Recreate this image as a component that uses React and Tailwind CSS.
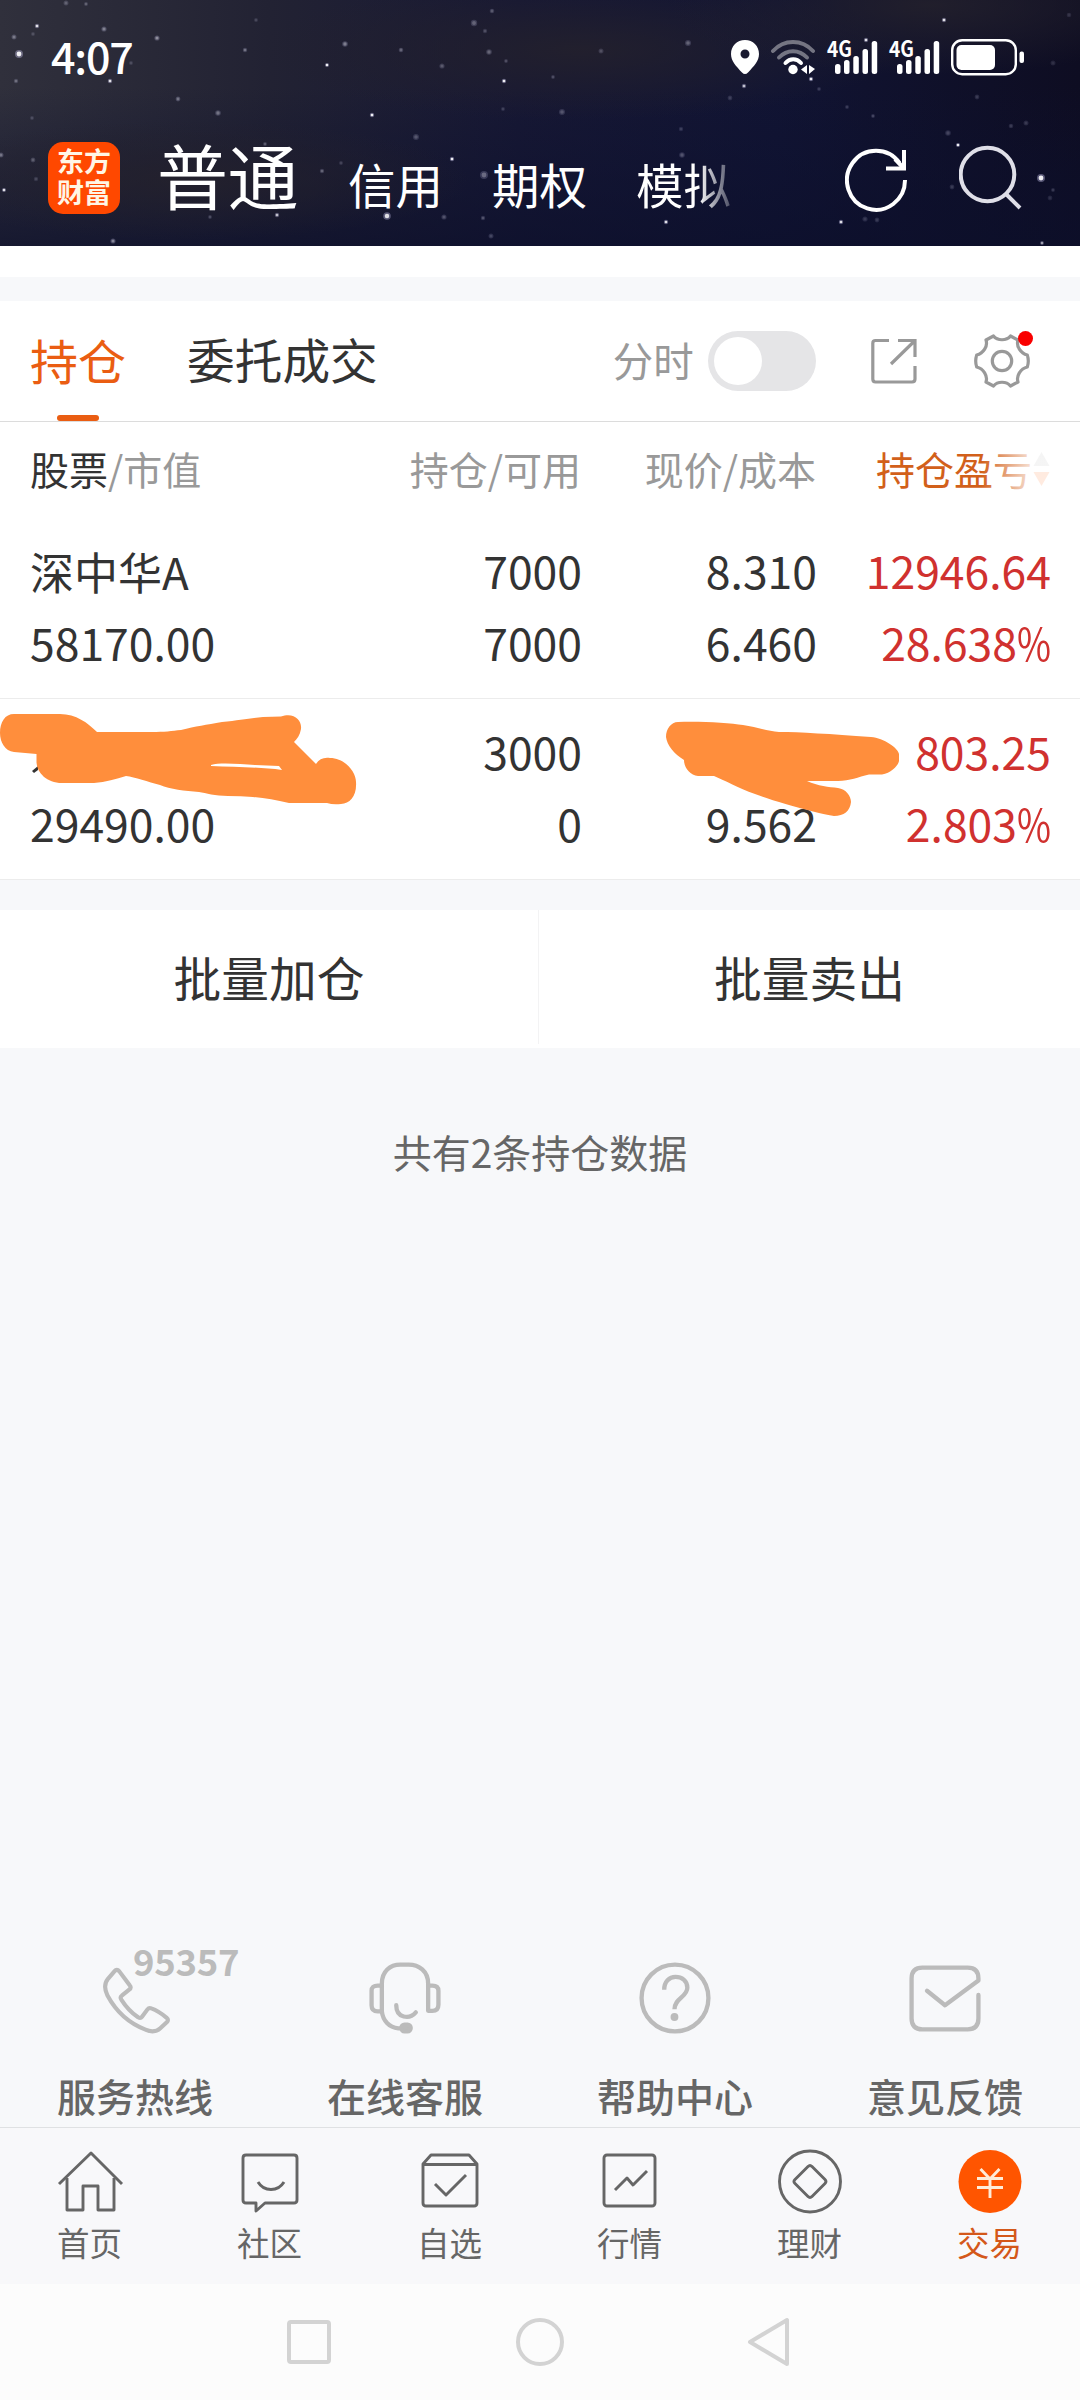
const holdings = [
  {
    name: '深中华A',
    value: '58170.00',
    amount: '7000',
    available: '7000',
    price: '8.310',
    cost: '6.460',
    profit: '12946.64',
    rate: '28.638',
  },
  {
    name: '',
    value: '29490.00',
    amount: '3000',
    available: '0',
    price: '',
    cost: '9.562',
    profit: '803.25',
    rate: '2.803',
  },
];

// [x, y, radius, opacity]
const stars = [
  [19, 54, 4, 0.95], [37, 26, 2.2, 0.9], [14, 37, 2.5, 0.5], [33, 34, 2, 0.3], [66, 3, 2.5, 0.4],
  [86, 4, 2, 0.4], [104, 29, 2.6, 0.55], [157, 38, 2.6, 0.6], [110, 81, 2.2, 0.9], [16, 81, 2.2, 0.45],
  [131, 63, 2, 0.3], [178, 99, 2.4, 0.5], [218, 113, 2.8, 0.5], [245, 50, 2.2, 0.5], [256, 20, 2, 0.3],
  [327, 65, 2.1, 0.95], [345, 44, 2.8, 0.55], [401, 50, 2.3, 0.45], [372, 115, 2.2, 0.95], [416, 137, 3, 0.4],
  [442, 66, 2.6, 0.4], [474, 23, 3.2, 0.45], [492, 11, 2.3, 0.4], [485, 31, 2.2, 0.35], [489, 52, 2.8, 0.45],
  [506, 61, 2, 0.35], [504, 81, 2.2, 0.95], [503, 109, 2, 0.3], [452, 159, 2.2, 0.95], [484, 175, 4, 0.5],
  [4, 190, 2.1, 0.9], [1, 155, 2.5, 0.5], [33, 160, 2.4, 0.4], [32, 118, 2, 0.3], [36, 179, 2.2, 0.3],
  [113, 241, 2.6, 0.6], [277, 215, 2.2, 0.8], [210, 217, 2, 0.35], [387, 216, 3.8, 0.9], [444, 217, 2.6, 0.4],
  [483, 218, 2.2, 0.4], [491, 236, 2.5, 0.35], [322, 171, 2.2, 0.45], [341, 163, 2, 0.3], [265, 144, 2, 0.4],
  [562, 112, 3, 0.4], [601, 51, 2.5, 0.35], [688, 43, 3, 0.45], [682, 155, 2.8, 0.4], [681, 129, 2.2, 0.3],
  [666, 222, 2.2, 0.9], [744, 86, 2.2, 0.8], [811, 79, 2.2, 0.95], [866, 40, 2.2, 0.9], [944, 20, 2.2, 0.9],
  [841, 222, 2.2, 0.9], [958, 145, 2.1, 0.95], [948, 133, 2.8, 0.35], [977, 97, 2.4, 0.3], [1026, 123, 2.5, 0.3],
  [1011, 126, 2.3, 0.3], [1041, 178, 4, 0.95], [1053, 190, 2, 0.3], [1050, 198, 2.4, 0.25], [1042, 243, 2, 0.7],
  [865, 219, 2.6, 0.3], [877, 220, 2.4, 0.3], [873, 116, 2, 0.35], [847, 107, 2, 0.3], [952, 187, 2.4, 0.3],
  [1053, 63, 2.5, 0.25], [1069, 15, 2.3, 0.25], [730, 98, 2.4, 0.3], [819, 89, 2, 0.3], [553, 77, 2, 0.35],
];

function StarrySky() {
  return (
    <svg className="absolute inset-0" width="1080" height="246" viewBox="0 0 1080 246">
      <defs>
        <linearGradient id="sky" x1="0" y1="0" x2="1" y2="0">
          <stop offset="0" stopColor="#30303c" />
          <stop offset="0.25" stopColor="#222233" />
          <stop offset="0.48" stopColor="#171834" />
          <stop offset="0.72" stopColor="#111433" />
          <stop offset="1" stopColor="#0e0d22" />
        </linearGradient>
        <linearGradient id="dusk" x1="0" y1="0" x2="0" y2="1">
          <stop offset="0.35" stopColor="#0c1030" stopOpacity="0" />
          <stop offset="1" stopColor="#0c0f2b" stopOpacity="0.7" />
        </linearGradient>
        <radialGradient id="haze">
          <stop offset="0" stopColor="#24212c" stopOpacity="0.85" />
          <stop offset="1" stopColor="#24212c" stopOpacity="0" />
        </radialGradient>
      </defs>
      <rect width="1080" height="246" fill="url(#sky)" />
      <rect width="1080" height="246" fill="url(#dusk)" />
      <ellipse cx="580" cy="50" rx="320" ry="70" fill="url(#haze)" />
      <ellipse cx="930" cy="5" rx="260" ry="70" fill="url(#haze)" />
      <ellipse cx="190" cy="180" rx="280" ry="60" fill="url(#haze)" />
      {stars.map(([x, y, r, o], i) => (
        <g key={i} fill="#cfcbf5">
          <circle cx={x} cy={y} r={r} opacity={o * 0.4} />
          <circle cx={x} cy={y} r={r * 0.6} opacity={o * o} fill="#fff" />
        </g>
      ))}
    </svg>
  );
}

function Signal() {
  return (
    <svg className="overflow-visible" width="51" height="36" viewBox="0 0 51 36" fill="#fff">
      <text x="0" y="18" fontSize="22" fontWeight="700" textLength="25" lengthAdjust="spacingAndGlyphs">4G</text>
      <rect x="8" y="25" width="5.5" height="10" rx="2.5" />
      <rect x="17" y="21" width="5.5" height="14" rx="2.5" />
      <rect x="26.300" y="17" width="5.5" height="18" rx="2.5" />
      <rect x="35.500" y="10" width="5.5" height="25" rx="2.5" />
      <rect x="44.700" y="2" width="5.5" height="33" rx="2.5" />
    </svg>
  );
}

function StatusBar() {
  return (
    <div className="relative flex h-[114px] items-center justify-between pl-[51px] pr-[56px]">
      <span className="text-[43px] leading-[50px] font-medium tracking-[-1.2px] text-white pb-[5px]">4:07</span>
      <div className="flex items-center">
        <svg width="28" height="36" viewBox="0 0 28 36" fill="#fff">
          <path fillRule="evenodd" d="M14 1C6 1 0 7 0 15c0 7 5 12 11 18.500q3 3 6 0C23 27 28 22 28 15 28 7 22 1 14 1zm0 9.500a4.500 4.500 0 1 1 0 9 4.500 4.500 0 0 1 0-9z" />
        </svg>
        <svg className="ml-[12px]" width="45" height="36" viewBox="0 0 45 36" fill="none" stroke="#fff" strokeWidth="4" strokeLinecap="round">
          <path d="M2 12C13 0 31 0 42 12" opacity="0.4" />
          <path d="M8 18.500c8-8.500 20-8.500 28 0" opacity="0.4" />
          <path d="M14.500 24c4.500-5 11-5 15.500 0" />
          <circle cx="22" cy="30.500" r="4.700" fill="#fff" stroke="none" />
          <path d="M36 26v9l-6-4.500zM38 26v9l6-5z" fill="#fff" stroke="none" />
        </svg>
        <div className="ml-[11px] flex gap-[11px]">
          <Signal />
          <Signal />
        </div>
        <svg className="ml-[11px]" width="73" height="38" viewBox="0 0 73 38">
          <rect x="1.200" y="2.200" width="63.600" height="34" rx="10" fill="none" stroke="#fff" strokeWidth="2.400" />
          <rect x="5.500" y="7" width="38.500" height="25" rx="5" fill="#fff" />
          <rect x="68.500" y="13.500" width="4.500" height="11.500" rx="2" fill="#fff" />
        </svg>
      </div>
    </div>
  );
}

function Header() {
  return (
    <div className="relative h-[246px] overflow-hidden">
      <StarrySky />
      <StatusBar />
      <div className="relative flex items-start pl-[48px] text-white">
        <div className="mt-[28px] w-[72px] h-[72px] rounded-[15px] bg-[#ff4800] px-[9px] pt-[3px] text-center text-[27px] font-bold leading-[31px] text-[#fff6e6]">
          东方<br />财富
        </div>
        <div className="ml-[37px] mt-[23px] flex items-baseline whitespace-nowrap leading-[72px]">
          <span className="text-[71px] tracking-[-0.500px]">普通</span>
          <span className="ml-[50px] mt-[2px] text-[47.500px]">信用</span>
          <span className="ml-[49px] text-[47.500px]">期权</span>
          <span className="ml-[49px] bg-linear-to-r from-white from-65% to-white/25 bg-clip-text text-[47.500px] text-transparent">模拟</span>
        </div>
        <svg className="ml-[114px] mt-[31px]" width="64" height="68" viewBox="0 0 64 68" fill="none" stroke="#fff" strokeWidth="4">
          <path d="M60 35A29 29.500 0 1 1 54.500 18" />
          <path d="M59 5v18.500H41" />
          <path d="M50 14l9 9.500" />
        </svg>
        <svg className="ml-[50px] mt-[31px]" width="64" height="68" viewBox="0 0 64 68" fill="none" stroke="#dfdfe8" strokeWidth="4">
          <circle cx="28.500" cy="29.500" r="26.800" />
          <path d="M47 49l14 14" />
        </svg>
      </div>
    </div>
  );
}

function TabBar() {
  return (
    <div className="flex h-[121px] items-center border-b border-[#dcdcdc] bg-white pl-[30px]">
      <div className="flex h-full flex-col items-center">
        <span className="mt-[34px] text-[48px] leading-[48px] text-[#ea5d12]">持仓</span>
        <span className="mt-auto h-[6px] w-[42px] rounded-full bg-[#ea5d12]" />
      </div>
      <span className="ml-[61px] pb-[5px] text-[47.700px] leading-[48px] text-[#333]">委托成交</span>
      <span className="ml-[235px] pb-[3px] text-[40.500px] leading-[44px] text-[#999]">分时</span>
      <div className="ml-[14px] flex h-[60px] w-[108px] items-center rounded-full bg-[#e5e5e7] pl-[6px]">
        <div className="h-[48px] w-[48px] rounded-full bg-white" />
      </div>
      <svg className="ml-[54px]" width="48" height="48" viewBox="0 0 48 48" fill="none" stroke="#999" strokeWidth="3.200">
        <path d="M19 3.500H5.500Q2.800 3.500 2.800 6.200V42q0 3 2.700 3H42q3 0 3-3V29" />
        <path d="M28 3.500H45V20M44 4.500L21 27" />
      </svg>
      <div className="relative ml-[56px]">
        <svg width="56" height="56" viewBox="0 0 56 56" fill="none" stroke="#999" strokeWidth="3.200" strokeLinejoin="round">
          <path d="M19.500 3c4 5 13 5 17 0l7.500 4c-2 6 2.500 13.500 9.300 15q2 6 0 12C46.500 35.500 42 43 44 49l-7.500 4c-4-5-13-5-17 0L12 49C14 43 9.500 35.500 2.700 34q-2-6 0-12C9.500 20.500 14 13 12 7z" />
          <circle cx="28" cy="28" r="9.700" />
        </svg>
        <span className="absolute right-[-3px] top-[-2px] h-[15px] w-[15px] rounded-full bg-[#f90000]" />
      </div>
    </div>
  );
}

function TableHead() {
  return (
    <div className="grid h-[96px] grid-cols-[301px_250px_235px_235px] pl-[30px] text-[39px] leading-[93px] text-[#999]">
      <span><span className="text-[#333]">股票</span>/市值</span>
      <span className="text-right">持仓/可用</span>
      <span className="text-right">现价/成本</span>
      <div className="relative flex items-center justify-end pb-[3px] text-[#d2601a]">
        <span>持仓盈亏</span>
        <svg className="ml-px mr-px" width="17" height="36" viewBox="0 0 17 36">
          <path d="M8.500 1l8 14h-16z" fill="#bbb" />
          <path d="M8.500 35l8-14h-16z" fill="#ff7a30" />
        </svg>
        <span className="absolute right-0 top-0 h-full w-[70px] bg-linear-to-r from-white/0 to-white/85 to-75%" />
      </div>
    </div>
  );
}

function HoldingRow({ item }) {
  return (
    <div className="grid h-[181px] grid-cols-[301px_251px_235px_234px] border-b border-[#ececec] pl-[30px] pt-[16px] text-[44.500px] leading-[72px] text-[#333]">
      <div className="flex flex-col">
        <span className="h-[72px] pt-px text-[44px]">{item.name}</span>
        <span>{item.value}</span>
      </div>
      <div className="flex flex-col text-right">
        <span className="h-[72px]">{item.amount}</span>
        <span>{item.available}</span>
      </div>
      <div className="flex flex-col text-right">
        <span className="h-[72px]">{item.price}</span>
        <span>{item.cost}</span>
      </div>
      <div className="flex flex-col text-right text-[#d0312f]">
        <span className="h-[72px]">{item.profit}</span>
        <span>
          {item.rate}
          <span className="ml-[-7px] inline-block origin-right scale-x-[0.83]">%</span>
        </span>
      </div>
    </div>
  );
}

// Brush strokes hiding the name and price of the last holding
function Scribbles() {
  return (
    <svg className="absolute bottom-0 left-0" width="1080" height="181" viewBox="0 699 1080 181">
      <path d="M32 771l6-5v4l-4 3z" fill="#333" />
      <g fill="#ff8e3c">
        <path
          fillRule="evenodd"
          d="M14 714H60C76 714 88 723 97 732H152C164 732 172 731 181 730C196 726 206 725 222 722C240 720 250 718 263 717L281 716.500C294 712 302 720 301 729C300 735 297 739 294 742L316 764C319 759 324 757 330 758C345 758 356 772 356 782C357 796 350 804 341 804Q333 805 327 803H289C276 800 265 798 253 797Q241 796 228 796C215 796 206 793 199 792C185 791 170 789 160 785C148 782 135 777 126 776C116 779 106 782 94 783H62C47 783 37 773 36.500 762V754L14 752C5 751 0 742 0 733C0 722 5 714 14 714ZM211 765C220 762 240 764 255 765L279 766L282 770C260 767 235 767 211 766Z"
        />
        <path d="M678 722C700 721 730 723 743 725C756 727 767 731 779 732C800 732 830 734 871 737C884 738 898 748 899 754V761C898 766 891 773 882 774.500H869C858 777 850 781 838 781H807C818 786 829 787 838 788C846 789 851 796 851 802C850 811 844 816 834 816C826 815 820 813 815 812C790 806 768 799 755 794C738 788 724 780 714 776H698C690 775 684 768 684 760C674 754 667 745 666 737C666 729 671 722 678 722Z" />
      </g>
    </svg>
  );
}

function BatchActions() {
  return (
    <div className="mt-[30px] flex h-[138px] bg-white pb-[4px] text-[47.700px] leading-[134px] text-[#333]">
      <div className="w-[539px] border-r border-[#f3f3f4] text-center">批量加仓</div>
      <div className="flex-1 text-center">批量卖出</div>
    </div>
  );
}

const services = [
  {
    label: '服务热线',
    icon: (
      <path
        d="M13.500 9.500q2.500-3 5 0L29 23.500q2 2.500-.5 4.500l-7.500 6q-2 1.500-.5 4 7 11 17 18 2.500 1.500 4-.5l5.500-7.500q1.500-2 4-1 7 2.500 15.500 9.500 2.500 2 0 4.500l-6.500 6q-6 5.500-15 1.500Q20 59 6.500 34 1.500 24 7 17z"
        transform="translate(1.500 0) scale(0.960)"
      />
    ),
  },
  {
    label: '在线客服',
    icon: (
      <>
        <path d="M12 49V21C12 9 20 2.500 30 2.500h8C48 2.500 57 9 57 21v26.500h4q6 0 6-6V28q0-5-6-5h-4" />
        <path d="M12 23H8q-6 0-6 5v14q0 6 6 6h4c1 9 7 15.500 16 16.500h3" />
        <path d="M26 42c0 13 13 14 19 7" />
        <rect x="31" y="61" width="9" height="6.500" rx="3" fill="#bbb" />
      </>
    ),
  },
  {
    label: '帮助中心',
    icon: (
      <>
        <circle cx="34.500" cy="35" r="32.500" />
        <path d="M24 27c0-8 5-12.500 11-12.500S46.500 18 46.500 25c0 9-12.500 10-12.500 21" strokeLinecap="butt" />
        <circle cx="34" cy="53.500" r="3.800" fill="#bbb" stroke="none" />
      </>
    ),
  },
  {
    label: '意见反馈',
    icon: <path d="M67 32v23q0 10.500-10.500 10.500h-44Q2 65.500 2 55V16Q2 5.500 12.500 5.500h44Q67 5.500 67 16v2L34.500 42 17 28" />,
  },
];

function Services() {
  return (
    <div className="mt-auto grid h-[165px] grid-cols-4">
      {services.map((s, i) => (
        <div key={s.label} className="relative flex flex-col items-center">
          <svg className="overflow-visible" width="72" height="72" viewBox="0 0 69 70" fill="none" stroke="#bbb" strokeWidth="4.200" strokeLinecap="round" strokeLinejoin="round">
            {s.icon}
          </svg>
          <span className="mt-[41px] text-[39px] font-medium leading-[40px] text-[#666]">{s.label}</span>
          {i === 0 && (
            <span className="absolute left-[133px] top-[-21px] text-[36.500px] font-bold leading-[40px] tracking-[-0.300px] text-[#bbb]">95357</span>
          )}
        </div>
      ))}
    </div>
  );
}

const navItems = [
  {
    label: '首页',
    icon: (
      <>
        <path d="M1 34L33 3l31 31" />
        <path d="M9 28v32h16V36h15v24h16V28" />
      </>
    ),
  },
  {
    label: '社区',
    icon: (
      <>
        <path d="M8 5h48q3 0 3 3v42q0 3-3 3H27l-9 8v-8H8q-3 0-3-3V8q0-3 3-3z" />
        <path d="M20 32c6 10 20 10 26 0" />
      </>
    ),
  },
  {
    label: '自选',
    icon: (
      <>
        <path d="M13 5h38l8 9v39q0 3-3 3H8q-3 0-3-3V14zM5 14.500h54" />
        <path d="M17 34l11 11 20-20" />
      </>
    ),
  },
  {
    label: '行情',
    icon: (
      <>
        <rect x="6" y="5" width="51" height="51" rx="3" />
        <path d="M17 40l12-12 6 7 14-14" />
      </>
    ),
  },
  {
    label: '理财',
    icon: (
      <>
        <circle cx="32" cy="31.500" r="30.500" />
        <path d="M30 16.500q2-2 4 0L47 29.500q2 2 0 4L34 46.500q-2 2-4 0L17 33.500q-2-2 0-4z" />
      </>
    ),
  },
  {
    label: '交易',
    active: true,
    icon: (
      <>
        <circle cx="32" cy="31.500" r="31.500" fill="#ff5500" stroke="none" />
        <path d="M22.500 19L32 29l9.500-10M32 29v19M19 28.500h26M19 37.500h26" stroke="#ffecd8" />
      </>
    ),
  },
];

function BottomNav() {
  return (
    <div className="grid h-[157px] grid-cols-6 border-t border-[#dfe1e3] bg-[#f8f8fa] pt-[22px]">
      {navItems.map((item) => (
        <div key={item.label} className="flex flex-col items-center pr-px">
          <svg className="overflow-visible" width="64" height="64" viewBox="0 0 64 64" fill="none" stroke="#666" strokeWidth="2.900" strokeLinejoin="round">
            {item.icon}
          </svg>
          <span className={item.active ? 'mt-[10px] text-[32.500px] leading-[36px] text-[#d4581a]' : 'mt-[10px] text-[32.500px] leading-[36px] text-[#666]'}>
            {item.label}
          </span>
        </div>
      ))}
    </div>
  );
}

function SystemBar() {
  return (
    <div className="flex h-[116px] items-center bg-[#fcfcfc] pl-[285px]">
      <svg width="507" height="52" viewBox="0 0 507 52" fill="none" stroke="#d3d3d3" strokeWidth="4" strokeLinejoin="round">
        <rect x="4" y="6" width="40" height="40" rx="2" />
        <circle cx="255" cy="26" r="22" />
        <path d="M502 4v44L465 26z" />
      </svg>
    </div>
  );
}

export default function App() {
  return (
    <div className="flex h-[2400px] w-[1080px] flex-col overflow-hidden bg-[#f7f8fa] font-['Noto_Sans_CJK_SC',sans-serif]">
      <Header />
      <div className="mb-[24px] h-[31px] bg-white" />
      <TabBar />
      <div className="relative bg-white">
        <TableHead />
        {holdings.map((item) => (
          <HoldingRow key={item.value} item={item} />
        ))}
        <Scribbles />
      </div>
      <BatchActions />
      <p className="mt-[81px] text-center text-[39px] leading-[44px] text-[#666]">共有2条持仓数据</p>
      <Services />
      <BottomNav />
      <SystemBar />
    </div>
  );
}
